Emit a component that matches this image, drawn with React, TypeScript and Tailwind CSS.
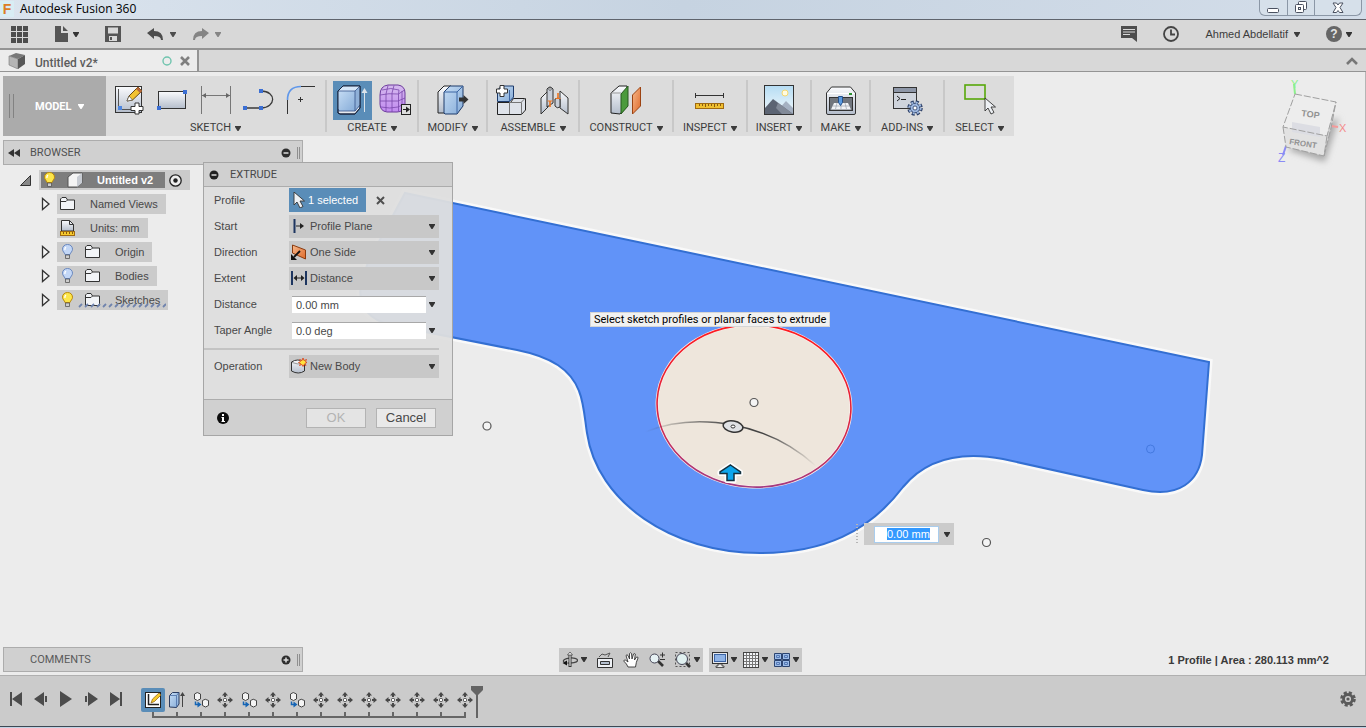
import { FC, ReactElement, ReactNode, useEffect, useRef, useState } from 'react'
import cn from 'clsx'

interface IconProps {
	w?: number
	h?: number
	className?: string
	children: ReactNode
}

const Icon = ({ w = 16, h = 16, className, children }: IconProps): ReactElement => (
	<svg width={w} height={h} viewBox={`0 0 ${w} ${h}`} fill="none" aria-hidden="true" className={cn('shrink-0', className)}>
		{children}
	</svg>
)

const Caret = ({ className }: { className?: string }): ReactElement => (
	<Icon w={6} h={5} className={className}>
		<path d="M0 0h6v1L3.500 5h-1L0 1z" fill="currentColor" />
	</Icon>
)

const Gradients = (): ReactElement => (
	<svg width="0" height="0" className="absolute" aria-hidden="true">
		<defs>
			<linearGradient id="steel" x1="0" y1="0" x2="0" y2="1">
				<stop offset="0" stopColor="#fafbfd" />
				<stop offset="1" stopColor="#b4bdcb" />
			</linearGradient>
			<linearGradient id="sky" x1="0" y1="0" x2="1" y2="1">
				<stop offset="0" stopColor="#c5dcf4" />
				<stop offset="1" stopColor="#86acd8" />
			</linearGradient>
			<linearGradient id="air" x1="0" y1="0" x2="0" y2="1">
				<stop offset="0" stopColor="#b5dcf3" />
				<stop offset="1" stopColor="#f3f9fc" />
			</linearGradient>
			<linearGradient id="clay" x1="0" y1="0" x2="1" y2="1">
				<stop offset="0" stopColor="#f7b98c" />
				<stop offset="1" stopColor="#df6a2a" />
			</linearGradient>
			<linearGradient id="violet" x1="0" y1="0" x2="0" y2="1">
				<stop offset="0" stopColor="#d5baee" />
				<stop offset="1" stopColor="#c18af0" />
			</linearGradient>
		</defs>
	</svg>
)

// ---- toolbar drawings ----

const SketchIcon = () => (
	<Icon w={32} h={32}>
		<rect x="1.500" y="2.500" width="26" height="26" fill="url(#steel)" stroke="#333" />
		<path d="M4.500 5v17M8 25.500h12" stroke="#555" />
		<rect x="4" y="22" width="4" height="4" fill="#4d86e0" />
		<path d="M13 17l2-5L24 3l4 4-9.500 9z" fill="#f2c230" stroke="#6b4a12" />
		<path d="M24 3l4 4-2 2-4-4z" fill="#b5663a" />
		<path d="M13 17l2-5 3.500 4z" fill="#fff" stroke="#444" strokeWidth=".6" />
		<path d="M21 19h4v3.500h4v4h-4V30h-4v-3.500h-4v-4h4z" fill="#fff" stroke="#333" />
	</Icon>
)

const RectangleIcon = () => (
	<Icon w={32} h={32}>
		<rect x="1.500" y="7.500" width="27" height="17" fill="url(#steel)" stroke="#333" />
		<path d="M26 6h4v4h-4zM0 22h4v4H0z" fill="#3b6fd4" />
	</Icon>
)

const DimensionIcon = () => (
	<Icon w={32} h={32}>
		<path d="M1.500 2v28M30.500 2v28M2 11.500h28" stroke="#777" />
		<path d="M2 11.500l4-2.500v5zM30 11.500L26 9v5z" fill="#666" />
	</Icon>
)

const SplineIcon = () => (
	<Icon w={32} h={32}>
		<path d="M2 24h16c15 0 16-17 0-17" stroke="#3a3a3a" strokeWidth="1.300" />
		<path d="M0 22h4v4H0zM16 22h4v4h-4zM16 5h4v4h-4z" fill="#3b6fd4" />
	</Icon>
)

const FilletIcon = () => (
	<Icon w={32} h={32}>
		<path d="M1.500 30V16M15 2.500h14" stroke="#333" />
		<path d="M1.500 16C1.500 7 6 2.500 15 2.500" stroke="#5f97ea" strokeWidth="1.600" />
		<path d="M14.500 13v5M12 15.500h5" stroke="#333" />
	</Icon>
)

const ExtrudeIcon = () => (
	<Icon w={39} h={39}>
		<path d="M5 32V10l5-5h17v22l-5 6H7z" fill="#e6e9ee" stroke="#1d2a44" />
		<path d="M5 28V10h17v20H6z" fill="url(#sky)" />
		<path d="M5 10l5-5h17l-5 5z" fill="#d7e7f8" />
		<path d="M22 10l5-5v20l-5 5z" fill="#8fb0d8" />
		<path d="M5 28l1 2h16l5-6M5 10h17v20M22 10l5-5" stroke="#35548a" strokeWidth=".8" />
		<path d="M5 32V10l5-5h17v22l-5 6H7z" stroke="#16233d" />
		<path d="M31.500 31V10" stroke="#dbe3ea" />
		<path d="M31.500 7l3 5h-6z" fill="#dbe3ea" />
	</Icon>
)

const FormIcon = () => (
	<Icon w={32} h={32}>
		<path d="M1 11Q1 2 9 1h10q7 1 7 8v11q-1 8-8 8H8q-7-1-7-8z" fill="url(#violet)" stroke="#6c3a9c" />
		<path d="M1 11q9-2 18-1M1 17h18M2 23q9 2 17 0M7 10v17M13 9v19M19.500 10v17M3 6q9-3 17 0l-.500 4 6-4M9 1.500L7 10M15 1.500L13 9M19 17l7-3M19 23l6-3M23 7v17" stroke="#7a48ab" strokeWidth=".8" />
		<rect x="22.500" y="20.500" width="9" height="10" fill="#ddd" stroke="#222" />
		<path d="M24 25h3v-2.500l4 3-4 3V26h-3z" fill="#222" />
	</Icon>
)

const ModifyIcon = () => (
	<Icon w={32} h={32}>
		<path d="M1 29V8l6-6h7v27z" fill="url(#steel)" stroke="#222" />
		<path d="M7 29V8l6-6h13v20l-6 8H8z" fill="url(#sky)" stroke="#1d3a6a" />
		<path d="M7 8h13v21M20 8l6-6" stroke="#3d66a4" />
		<path d="M22 13.500h4.500v-2.500l5 4.500-5 4.500v-2.500H22z" fill="#333" />
	</Icon>
)

const ComponentIcon = () => (
	<Icon w={32} h={32}>
		<path d="M2.500 17.500V6l4-4h12v11l-4 4.500z" fill="url(#sky)" stroke="#1d3a6a" />
		<path d="M14.500 17.500l4-4M14.500 6v11" stroke="#3d66a4" />
		<path d="M2.500 18.500h13l3-4h12V26l-4 4.500h-24z" fill="#dfe3ea" stroke="#222" />
		<path d="M14.500 18v12M14.500 18.500h12v12M26.500 18l4-4" stroke="#777" />
		<path d="M5 1.500h4v3.500h3.500v4H9v3.500H5V9H1.500V5H5z" fill="#fff" stroke="#333" />
	</Icon>
)

const JointIcon = () => (
	<Icon w={32} h={32}>
		<path d="M2 14l7-7v16l-7 7z" fill="url(#steel)" stroke="#333" />
		<path d="M8 5q3-4 6 0v14l-6 4z" fill="#c8ced8" stroke="#333" />
		<circle cx="11" cy="5" r="1.300" fill="#fff" stroke="#333" strokeWidth=".7" />
		<path d="M21 7l8 7v16l-8-6z" fill="url(#steel)" stroke="#333" />
		<path d="M16 15q3-2 5 0v8q-3 2-5-1z" fill="#c8ced8" stroke="#333" />
		<path d="M11 17v6M19 9v6" stroke="#ee7420" strokeWidth="1.600" />
		<path d="M8.500 17h5M16.500 14.500h5" stroke="#ee7420" />
	</Icon>
)

const ConstructIcon = () => (
	<Icon w={32} h={32}>
		<path d="M1 29V9l8-7h8v20l-7 8z" fill="url(#steel)" stroke="#222" />
		<path d="M11 10l7-8v20l-7 8z" fill="#4b9a3c" stroke="#27591e" />
		<path d="M1 9h10" stroke="#999" />
		<path d="M22.500 11l8-8v19l-8 8z" fill="url(#clay)" stroke="#9c4312" />
	</Icon>
)

const InspectIcon = () => (
	<Icon w={32} h={32}>
		<path d="M1.500 9v5M29.500 9v5M2 11.500h27" stroke="#333" />
		<rect x="1.500" y="19.500" width="28" height="5" fill="#f0c030" stroke="#a06a10" />
		<path d="M5.500 20v2M8.500 20v2M11.500 20v3M14.500 20v2M17.500 20v2M20.500 20v3M23.500 20v2M26.500 20v2" stroke="#8a5a10" />
	</Icon>
)

const InsertIcon = () => (
	<Icon w={32} h={32}>
		<rect x="1.500" y="1.500" width="29" height="29" fill="url(#air)" stroke="#333" />
		<circle cx="22" cy="9" r="3" fill="#fffbe0" stroke="#f5d770" />
		<path d="M14 27l9-10 7 7v6H14z" fill="#a5b1c2" />
		<path d="M2 24l8-9 20 15H2z" fill="#5c6473" />
		<path d="M10 15l5 4-2 5 6 6h11z" fill="#828a98" />
	</Icon>
)

const MakeIcon = () => (
	<Icon w={32} h={32}>
		<path d="M1.500 9l5-6h19l5 6v20q0 1.500-1.500 1.500H3Q1.500 30.500 1.500 29z" fill="url(#steel)" stroke="#333" />
		<path d="M2 9.500h28" stroke="#fff" />
		<rect x="24" y="9" width="3" height="2" fill="#2c9030" />
		<rect x="4.500" y="13.500" width="23" height="13" fill="#70757d" stroke="#333" />
		<path d="M9 19h14l3 6.500H6z" fill="#f1f3f6" />
		<path d="M7.500 22h17M12 19l-1.500 6M16 19v6M20 19l1.500 6" stroke="#99a1ad" strokeWidth=".7" />
		<path d="M13.500 12.500h4v6l-2 3-2-3z" fill="#5b9be0" stroke="#24508c" />
	</Icon>
)

const AddInsIcon = () => (
	<Icon w={32} h={32}>
		<rect x="2.500" y="3.500" width="23" height="21" fill="#cfd4dc" stroke="#333" />
		<rect x="3" y="4" width="22" height="4" fill="#8e97a8" />
		<path d="M3 8.500h22" stroke="#333" />
		<path d="M6 12l3 2.500L6 17M10 15.500h5" stroke="#222" />
		<circle cx="24" cy="24" r="5.500" stroke="#2c3f66" strokeWidth="4.500" strokeDasharray="2.600 1.720" />
		<circle cx="24" cy="24" r="4.800" fill="#9db7df" stroke="#2c3f66" />
		<circle cx="24" cy="24" r="5.600" stroke="#9db7df" strokeWidth="2" strokeDasharray="2 2.400" />
		<circle cx="24" cy="24" r="2" fill="#fff" stroke="#2c3f66" strokeWidth=".8" />
	</Icon>
)

const CursorShape = ({ x, y }: { x: number, y: number }) => (
	<path d="M0 0v13l3-3 3 6 3-1.500-3-5.500h4.500z" transform={`translate(${x} ${y})`} fill="#eef1f5" stroke="#333" strokeWidth=".9" />
)

const SelectIcon = () => (
	<Icon w={32} h={32}>
		<rect x="1" y="1" width="20" height="14" stroke="#58a80a" strokeWidth="1.600" />
		<CursorShape x={21} y={14} />
	</Icon>
)

interface ToolGroupProps {
	label: string
	className: string
	iconsClassName?: string
	children: ReactNode
	last?: boolean
}

const ToolGroup = ({ label, className, iconsClassName, children, last }: ToolGroupProps): ReactElement => (
	<div className={cn('shrink-0 flex items-center', className)}>
		<div className="flex-1 pt-1">
			<div className={cn('flex h-10 items-center justify-center', iconsClassName)}>{children}</div>
			<button className="flex h-4 w-full items-center justify-center gap-1 font-['Roboto',sans-serif] text-[11px] text-[#3c3c3c]">
				{label}
				<Caret />
			</button>
		</div>
		{!last && <div className="h-13 w-0.5 bg-[#c8c8c8]" />}
	</div>
)

const Tool = ({ name, active, children }: { name: string, active?: boolean, children: ReactNode }): ReactElement => (
	<button aria-label={name} className={cn(active && 'bg-[#5a8db8]')}>{children}</button>
)

const Ribbon = (): ReactElement => (
	<div className="flex h-[60px] w-max bg-[#dcdcdc]">
		<button className="flex w-[103px] items-center bg-[#ababab] pl-1.5 text-white">
			<span className="mr-[21px] h-6 w-[5px] border-x border-[#828282]" />
			<span className="mr-1.5 pt-0.5 font-['Roboto',sans-serif] text-[11px] font-bold">MODEL</span>
			<Caret />
		</button>
		<ToolGroup label="SKETCH" className="w-[221px]" iconsClassName="gap-[11px]">
			<Tool name="Create sketch"><SketchIcon /></Tool>
			<Tool name="Rectangle"><RectangleIcon /></Tool>
			<Tool name="Sketch dimension"><DimensionIcon /></Tool>
			<Tool name="Spline"><SplineIcon /></Tool>
			<Tool name="Fillet"><FilletIcon /></Tool>
		</ToolGroup>
		<ToolGroup label="CREATE" className="w-[92px]" iconsClassName="gap-[7px]">
			<Tool name="Extrude" active><ExtrudeIcon /></Tool>
			<Tool name="Create form"><FormIcon /></Tool>
		</ToolGroup>
		<ToolGroup label="MODIFY" className="w-[69px]">
			<Tool name="Press pull"><ModifyIcon /></Tool>
		</ToolGroup>
		<ToolGroup label="ASSEMBLE" className="w-[92px]" iconsClassName="gap-3">
			<Tool name="New component"><ComponentIcon /></Tool>
			<Tool name="Joint"><JointIcon /></Tool>
		</ToolGroup>
		<ToolGroup label="CONSTRUCT" className="w-[94px]">
			<Tool name="Offset plane"><ConstructIcon /></Tool>
		</ToolGroup>
		<ToolGroup label="INSPECT" className="w-[74px]">
			<Tool name="Measure"><InspectIcon /></Tool>
		</ToolGroup>
		<ToolGroup label="INSERT" className="w-16">
			<Tool name="Insert image"><InsertIcon /></Tool>
		</ToolGroup>
		<ToolGroup label="MAKE" className="w-[59px]">
			<Tool name="3D print"><MakeIcon /></Tool>
		</ToolGroup>
		<ToolGroup label="ADD-INS" className="w-[74px]">
			<Tool name="Scripts and add-ins"><AddInsIcon /></Tool>
		</ToolGroup>
		<ToolGroup label="SELECT" className="w-[69px]" last>
			<Tool name="Select"><SelectIcon /></Tool>
		</ToolGroup>
	</div>
)

// ---- window chrome ----

const TitleBar = (): ReactElement => (
	<header className="flex h-5 shrink-0 items-start justify-between border-b border-[#5f646d] bg-linear-to-r from-[#dbe4ee] via-[#c6d3e1] to-[#d3dde9]">
		<div className="flex items-center gap-1.5">
			<span className="flex h-4 w-3.5 items-center justify-center bg-[#d8edf4] font-['Liberation_Sans',sans-serif] text-sm font-bold text-[#dd7d26]">F</span>
			<h1 className="font-['Open_Sans',sans-serif] text-xs leading-[17px] text-black">Autodesk Fusion 360</h1>
		</div>
		<div className="mr-1 flex h-4 divide-x divide-[#8b97a6] rounded-b-md border border-t-0 border-[#8b97a6] bg-[#d6e0ea]">
			<button aria-label="Minimize" className="flex w-7 items-center justify-center">
				<Icon w={13} h={12}><rect x=".5" y="6.500" width="11" height="4" rx="1" fill="#fff" stroke="#4a5160" /></Icon>
			</button>
			<button aria-label="Restore" className="flex w-[27px] items-center justify-center">
				<Icon w={13} h={13}>
					<rect x="3.500" y=".5" width="8" height="8" rx="1" fill="#fff" stroke="#4a5160" />
					<rect x=".5" y="3.500" width="8" height="8" rx="1" fill="#fff" stroke="#4a5160" />
					<rect x="3.500" y="6.500" width="2" height="2" stroke="#4a5160" />
				</Icon>
			</button>
			<button aria-label="Close" className="flex w-[46px] items-center justify-center">
				<Icon w={13} h={12}>
					<path d="M1 1h3.500L6 3l1.500-2H11L8 5.500l3 5H7.500L6 8.500l-1.500 2H1l3-5z" fill="#fff" stroke="#4a5160" />
				</Icon>
			</button>
		</div>
	</header>
)

const QuickBar = (): ReactElement => (
	<nav className="flex h-[30px] shrink-0 items-center justify-between border-b-2 border-[#949494] bg-[#d8d8d8] pr-3.5 pl-[11px] text-[#4a4a4a]">
		<div className="flex items-center gap-[26px]">
			<button aria-label="Data panel">
				<Icon w={17} h={17}>
					<path d="M0 0h5v5H0zM6 0h5v5H6zM12 0h5v5h-5zM0 6h5v5H0zM6 6h5v5H6zM12 6h5v5h-5zM0 12h5v5H0zM6 12h5v5H6zM12 12h5v5h-5z" fill="#4d4d4d" />
				</Icon>
			</button>
			<button aria-label="File" className="flex items-center gap-[5px]">
				<Icon w={14}><path d="M1 0h6v7h7v9H1zM9 0l5 5H9z" fill="#555" /></Icon>
				<Caret className="text-[#333]" />
			</button>
			<button aria-label="Save">
				<Icon><path fillRule="evenodd" d="M0 0h16v16H0zM3 1.500v6h10v-6zM4 10v5h8v-5zM5 11h2v3H5z" fill="#555" /></Icon>
			</button>
			<div className="flex items-center gap-4">
				<button aria-label="Undo" className="flex items-center gap-1.5 text-[#4d4d4d]">
					<Icon w={17} h={14}><path d="M0 6l7-5v3q9 0 9 9h-2q0-4-7-4v3z" fill="currentColor" /></Icon>
					<Caret />
				</button>
				<button aria-label="Redo" className="flex items-center gap-1.5 text-[#858585]">
					<Icon w={17} h={14}><path d="M17 6l-7-5v3q-9 0-9 9h2q0-4 7-4v3z" fill="currentColor" /></Icon>
					<Caret />
				</button>
			</div>
		</div>
		<div className="flex items-center gap-[26px]">
			<button aria-label="Comments">
				<Icon><path fillRule="evenodd" d="M0 0h16v16l-5-4H0zM2 3v1h12V3zM2 5.500v1h12v-1zM2 8v1h7V8z" fill="#4d4d4d" /></Icon>
			</button>
			<button aria-label="Job status">
				<Icon><circle cx="8" cy="8" r="7" stroke="#444" strokeWidth="1.800" /><path d="M8 3.500V8.500h4" stroke="#444" strokeWidth="1.800" /></Icon>
			</button>
			<button className="flex items-center gap-1.5 text-[11px] text-[#3c3c3c]">
				Ahmed Abdellatif
				<Caret />
			</button>
			<button aria-label="Help" className="flex items-center gap-1">
				<span className="flex size-4 items-center justify-center rounded-full bg-[#666] text-xs font-bold text-[#e4e4e4]">?</span>
				<Caret className="text-[#333]" />
			</button>
		</div>
	</nav>
)

const TabBar = (): ReactElement => (
	<div className="flex h-[22px] shrink-0 items-stretch justify-between border-b border-[#949494] bg-[#d8d8d8]">
		<div className="flex w-[199px] items-center border-r-2 border-[#949494] bg-[#ececec] pr-[7px] pl-2">
			<Icon w={18} h={16}>
				<path d="M1 3l7-3 9 2-7 4z" fill="#777" />
				<path d="M1 3l9 3v10l-9-4z" fill="#b5b5b5" stroke="#777" strokeWidth=".6" />
				<path d="M10 6l7-4v9l-7 5z" fill="#585858" />
			</Icon>
			<span className="ml-[9px] flex-1 pt-1 font-['Roboto',sans-serif] text-xs font-medium text-[#5c5c5c]">Untitled v2*</span>
			<Icon w={10} h={10} className="mr-2"><circle cx="5" cy="5" r="4" stroke="#6fc4ae" strokeWidth="1.400" /></Icon>
			<button aria-label="Close tab">
				<Icon w={10} h={10}><path d="M1 1l8 8M9 1L1 9" stroke="#808080" strokeWidth="2.600" /></Icon>
			</button>
		</div>
		<button aria-label="Collapse" className="mr-2">
			<Icon w={12} h={10}><path d="M1 8l5-5 5 5" stroke="#777" strokeWidth="2.600" /></Icon>
		</button>
	</div>
)

// ---- canvas ----

const Model = (): ReactElement => {
	const outline = 'M405 193L1209 362L1202 455C1199 481 1179 498 1143 490L1003 459C961 451 927 458 903 487C869 532 823 553 760 553C672 553 597 502 587 433C585 421 584 403 579 391C571 370 552 357 517 350L390 325C365 318 358 303 361 285L368 262Z'

	return (
		<svg className="absolute inset-0 h-full w-full" viewBox="0 72 1365 603" preserveAspectRatio="xMidYMid slice" aria-hidden="true">
			<defs>
				<linearGradient id="rim" x1="0" y1="0" x2="0" y2="1">
					<stop offset="0" stopColor="#ff1a20" />
					<stop offset=".5" stopColor="#e0233c" />
					<stop offset="1" stopColor="#a23a80" />
				</linearGradient>
				<linearGradient id="sweep" gradientUnits="userSpaceOnUse" x1="645" y1="0" x2="816" y2="0">
					<stop offset="0" stopColor="#444" stopOpacity="0" />
					<stop offset=".5" stopColor="#444" />
					<stop offset=".7" stopColor="#444" />
					<stop offset="1" stopColor="#444" stopOpacity="0" />
				</linearGradient>
			</defs>
			<path d={outline} fill="none" stroke="#f9f9f9" strokeWidth="7" />
			<path d={outline} fill="#6193f8" stroke="#336fd2" strokeWidth="2" />
			<ellipse cx="754" cy="406" rx="97" ry="81" transform="rotate(4 754 406)" fill="#eee6dc" stroke="#fbeeea" strokeWidth="3" />
			<ellipse cx="754" cy="406" rx="97" ry="81" transform="rotate(4 754 406)" fill="none" stroke="url(#rim)" strokeWidth="1.600" />
			<path d="M645 432Q685 416 733 425T816 466" fill="none" stroke="url(#sweep)" strokeWidth="1.500" />
			<ellipse cx="733" cy="426.500" rx="10" ry="5.500" transform="rotate(10 733 426.500)" fill="#dfe1e4" stroke="#333" strokeWidth="1.500" />
			<ellipse cx="733" cy="426.500" rx="2" ry="1.500" fill="#fff" stroke="#333" />
			<path d="M730.500 465l10 7v1.500H734v7h-7v-7h-7V472z" fill="none" stroke="#fff" strokeWidth="5" strokeLinejoin="round" />
			<path d="M730.500 465l10 7v1.500H734v7h-7v-7h-7V472z" fill="#0da6ec" stroke="#12303f" strokeWidth="1.500" />
			<g fill="#f4f4f4" stroke="#555" strokeWidth="1.200">
				<circle cx="754" cy="402.500" r="4" />
				<circle cx="487" cy="426" r="4" />
				<circle cx="986.500" cy="542.500" r="4" />
			</g>
			<circle cx="1150.500" cy="449" r="4" fill="none" stroke="#4479e0" />
		</svg>
	)
}

const ViewCube = (): ReactElement => (
	<svg width="80" height="96" viewBox="1272 76 80 96" className="absolute top-1 right-3.5 font-['Liberation_Sans',sans-serif]" role="img" aria-label="View cube">
		<defs>
			<filter id="soft" x="-30%" y="-30%" width="160%" height="160%"><feGaussianBlur stdDeviation="3" /></filter>
		</defs>
		<path d="M1289 150l37 12 14-44-26 10z" fill="#aaa" filter="url(#soft)" />
		<path d="M1296 94l-1-10" stroke="#8df08d" strokeWidth="2" />
		<path d="M1332 126l7 1" stroke="#f59a9a" strokeWidth="2" />
		<path d="M1287 146l-3 9" stroke="#8b8bf5" strokeWidth="2" />
		<path d="M1296 94l41 8-9 34-44-9z" fill="#ededed" />
		<path d="M1284 127l44 9-3 20-38-9z" fill="#e2e2e2" />
		<path d="M1328 136l9-34-5 26-7 28z" fill="#d2d2d2" />
		<path d="M1293 122l28 5v10l-28-5z" fill="#dcdde3" />
		<path d="M1296 94l41 8-9 34-44-9zM1284 127l3 20 38 9 3-20M1325 156l7-28 5-26" fill="none" stroke="#a0a0a0" strokeDasharray="7 2" />
		<g fontWeight="bold" fill="#929292">
			<text x="1302" y="116" fontSize="9" transform="rotate(8 1302 116)">TOP</text>
			<text x="1290" y="144" fontSize="8" transform="rotate(9 1290 144)">FRONT</text>
		</g>
		<text x="1292" y="88" fontSize="11" fill="#8df08d">Y</text>
		<text x="1340" y="132" fontSize="11" fill="#f58a8a">X</text>
		<text x="1279" y="162" fontSize="12" fill="#8b8bf5">Z</text>
	</svg>
)

const FloatingValue = (): ReactElement => {
	const input = useRef<HTMLInputElement>(null)

	useEffect(() => {
		input.current?.focus()
		input.current?.select()
	}, [])

	return (
		<div className="absolute top-[451px] left-[855px] flex items-center">
			<Icon w={9} h={22}><path d="M2 1v21" stroke="#b5b5b5" strokeWidth="2" strokeDasharray="1 2" /></Icon>
			<div className="flex h-[22px] items-center bg-[#cbcbcb] pr-1 pl-2.5">
				<input
					ref={input}
					type="text"
					aria-label="Distance value"
					defaultValue="0.00 mm"
					className="h-[17px] w-[65px] border border-[#a9cdee] bg-white pl-3 text-[11px] text-[#333] outline-none selection:bg-[#3399ff] selection:text-white"
				/>
				<button aria-label="Value options" className="ml-[5px]"><Caret className="text-[#333]" /></button>
			</div>
		</div>
	)
}

// ---- browser tree ----

const Bulb = ({ on }: { on?: boolean }): ReactElement => (
	<Icon w={11}>
		<path d="M5.500.500C2.500.500.500 2.500.500 5.200c0 2.300 2 3.300 2.500 5.300h5c.500-2 2.500-3 2.500-5.300C10.500 2.500 8.500.500 5.500.500z" fill={on ? '#fde64a' : '#c3d7f6'} stroke={on ? '#b8860b' : '#6886bd'} />
		<path d="M4 3q-1.500 1-1 3" stroke="#fff" strokeWidth="1.400" />
		<path d="M3.500 11h4v3.500h-4z" fill="#ccc" stroke="#555" strokeWidth=".8" />
	</Icon>
)

const Folder = (): ReactElement => (
	<Icon w={16} h={14}>
		<path d="M.500 12.500V2L2 .500h4L7.500 3h7v9.500z" fill="#f2f4f7" stroke="#333" />
		<path d="M1 4.500h5L7.500 3" stroke="#333" />
	</Icon>
)

const UnitsIcon = (): ReactElement => (
	<Icon w={16}>
		<path d="M1.500 11V.500h8l4 4V11z" fill="url(#steel)" stroke="#333" />
		<path d="M9.500.500v4h4" stroke="#333" />
		<rect x=".5" y="11.500" width="14" height="4" fill="#f5c92c" stroke="#a06a10" />
		<path d="M3.500 12v2M6.500 12v2M9.500 12v2M12.500 12v2" stroke="#8a5a10" />
	</Icon>
)

interface TreeItemProps {
	label: string
	bulb?: 'on' | 'off'
	leaf?: boolean
	hatched?: boolean
}

const TreeItem = ({ label, bulb, leaf, hatched }: TreeItemProps): ReactElement => (
	<li className="flex h-5 items-center">
		<div className="w-[18px]">
			{!leaf && (
				<button aria-label={`Expand ${label}`} className="block">
					<Icon w={11} h={14}><path d="M3.500 1.500v11L10 7z" fill="#f4f4f4" stroke="#333" strokeWidth="1.300" /></Icon>
				</button>
			)}
		</div>
		<div className="relative flex h-5 items-center bg-[#cbcbcb] pr-2 pl-[3px]">
			{bulb && <span className="mr-3 ml-[2px]"><Bulb on={bulb === 'on'} /></span>}
			{leaf ? <UnitsIcon /> : <Folder />}
			<span className="ml-[14px] text-[11px] text-[#484848]">{label}</span>
			{hatched && (
				<svg className="absolute right-0.5 bottom-0.5 h-[5px] w-[88px]" aria-hidden="true">
					<defs>
						<pattern id="hatch" width="6" height="5" patternUnits="userSpaceOnUse">
							<path d="M1 4l3-3" stroke="#6f83ad" strokeWidth="1.800" />
						</pattern>
					</defs>
					<rect width="88" height="5" fill="url(#hatch)" />
				</svg>
			)}
		</div>
	</li>
)

const Browser = (): ReactElement => (
	<section className="mt-1 w-[300px]">
		<div className="flex h-[25px] items-center border border-[#acacac] bg-[#d0d0d0] pr-0.5 pl-1 text-[#505050]">
			<Icon w={12} h={8}><path d="M6 0v8L0 4zM12 0v8L6 4z" fill="#333" /></Icon>
			<h2 className="ml-2.5 flex-1 pt-0.5 font-['Roboto',sans-serif] text-[11px]">BROWSER</h2>
			<button aria-label="Collapse browser">
				<Icon w={10} h={10}><circle cx="5" cy="5" r="4.500" fill="#2e2e2e" /><path d="M2.500 5h5" stroke="#ddd" strokeWidth="1.500" /></Icon>
			</button>
			<span className="ml-1.5 h-3 w-[3px] border-x border-[#8f8f8f]" />
		</div>
		<ul className="mt-[5px] flex flex-col gap-1">
			<li className="flex h-5 items-center pl-4">
				<button aria-label="Collapse Untitled v2" className="w-5">
					<Icon w={14} h={13}><path d="M1.500 11.500h10v-10z" fill="#888" stroke="#333" /></Icon>
				</button>
				<div className="flex h-5 items-center bg-[#cbcbcb] pr-2 pl-0.5">
					<div className="flex h-4 items-center bg-[#7d7d7d] pr-3 pl-[3px]">
						<Bulb on />
						<Icon className="ml-3">
							<path d="M1 5l5-4h9v10l-5 4H1z" fill="#f4f4f4" stroke="#555" />
							<path d="M10 5l5-4v10l-5 4z" fill="#c8ccd3" />
						</Icon>
						<span className="ml-3.5 text-[11px] font-bold text-white">Untitled v2</span>
					</div>
					<Icon w={13} h={13} className="ml-1"><circle cx="6.500" cy="6.500" r="5.700" fill="#eee" stroke="#222" strokeWidth="1.300" /><circle cx="6.500" cy="6.500" r="2.200" fill="#222" /></Icon>
				</div>
			</li>
			<li>
				<ul className="flex flex-col gap-1 pl-9">
					<TreeItem label="Named Views" />
					<TreeItem label="Units: mm" leaf />
					<TreeItem label="Origin" bulb="off" />
					<TreeItem label="Bodies" bulb="off" />
					<TreeItem label="Sketches" bulb="on" hatched />
				</ul>
			</li>
		</ul>
	</section>
)

// ---- extrude dialog ----

const Row = ({ id, label, children }: { id: string, label: string, children: ReactNode }): ReactElement => (
	<div className="flex h-[26px] items-center">
		<label htmlFor={id} className="w-[75px] shrink-0">{label}</label>
		{children}
	</div>
)

const Dropdown = ({ id, value, icon }: { id: string, value: string, icon: ReactNode }): ReactElement => (
	<div className="flex h-[23px] min-w-0 flex-1 items-center bg-[#c8c8c8] pr-1 pl-0.5">
		{icon}
		<select id={id} className="ml-[3px] min-w-0 flex-1 appearance-none bg-transparent outline-none">
			<option>{value}</option>
		</select>
		<Caret className="text-[#333]" />
	</div>
)

const ValueInput = ({ id, initial }: { id: string, initial: string }): ReactElement => {
	const [value, setValue] = useState(initial)

	return (
		<div className="flex min-w-0 flex-1 items-center pr-1 pl-[3px]">
			<input
				id={id}
				type="text"
				value={value}
				onChange={e => setValue(e.target.value)}
				className="h-[17px] min-w-0 flex-1 border-t border-[#a8a8a8] bg-white pl-1 outline-none"
			/>
			<Caret className="ml-[3px] text-[#333]" />
		</div>
	)
}

const ExtrudeDialog = (): ReactElement => (
	<form className="absolute top-[90px] left-[203px] w-[250px] border border-[#a6a6a6] bg-[#dedede]/95 text-[11px] text-[#484848]" onSubmit={e => e.preventDefault()}>
		<div className="flex h-6 items-center gap-[11px] border-b border-[#acacac] bg-[#d0d0d0] pl-[5px]">
			<Icon w={10} h={10}><circle cx="5" cy="5" r="4.500" fill="#222" /><path d="M2.500 5h5" stroke="#ddd" strokeWidth="1.500" /></Icon>
			<h2 className="pt-0.5 font-['Roboto',sans-serif]">EXTRUDE</h2>
		</div>
		<div className="pr-[13px] pb-5 pl-2.5">
			<Row id="profile" label="Profile">
				<button id="profile" type="button" className="flex h-6 items-center bg-[#5a8db8] pr-2 pl-[3px] text-white">
					<Icon><CursorShape x={2} y={0} /></Icon>
					1 selected
				</button>
				<button type="button" aria-label="Clear profile" className="ml-2.5">
					<Icon w={9} h={9}><path d="M1 1l7 7M8 1L1 8" stroke="#505050" strokeWidth="2" /></Icon>
				</button>
			</Row>
			<Row id="start" label="Start">
				<Dropdown id="start" value="Profile Plane" icon={<Icon><path d="M3.500 1v14" stroke="#1d3560" strokeWidth="2" /><path d="M5 8h6" stroke="#222" /><path d="M9 5l4 3-4 3z" fill="#222" /></Icon>} />
			</Row>
			<Row id="direction" label="Direction">
				<Dropdown
					id="direction"
					value="One Side"
					icon={(
						<Icon>
							<path d="M1.500 1l13 5v9l-13-6z" fill="url(#clay)" stroke="#8a3b10" />
							<path d="M9 7L3 13" stroke="#111" strokeWidth="1.800" />
							<path d="M0 16v-6l6 6z" fill="#111" />
						</Icon>
					)}
				/>
			</Row>
			<Row id="extent" label="Extent">
				<Dropdown id="extent" value="Distance" icon={<Icon><path d="M1 1v14M15 1v14" stroke="#1d3560" strokeWidth="2" /><path d="M4 8h8" stroke="#222" /><path d="M6 5L2.500 8 6 11zM10 5l3.500 3-3.500 3z" fill="#222" /></Icon>} />
			</Row>
			<Row id="distance" label="Distance"><ValueInput id="distance" initial="0.00 mm" /></Row>
			<Row id="taper" label="Taper Angle"><ValueInput id="taper" initial="0.0 deg" /></Row>
			<hr className="mt-[5px] mb-[3px] -ml-2.5 border-t-2 border-[#c3c3c3]" />
			<Row id="operation" label="Operation">
				<Dropdown
					id="operation"
					value="New Body"
					icon={(
						<Icon>
							<path d="M.500 4q6-4 13 0v9q-6 4-13 0z" fill="url(#steel)" stroke="#333" />
							<path d="M1 4.500q6 3 12 0" stroke="#999" />
							<path d="M12 0l1 2.500L15.500 1.500 14.500 3.500 16 4.500l-2 .800 1 2.200-2-1L12 8.500l-1-2-2.500 1 1-2L7.500 4.500l2-1-.800-2L11 2.500z" fill="#ffe23d" stroke="#d4381c" strokeWidth=".8" />
						</Icon>
					)}
				/>
			</Row>
		</div>
		<div className="flex h-9 items-center gap-2.5 border-t border-[#acacac] bg-[#d0d0d0] pr-4 pl-[13px]">
			<Icon w={12} h={12} className="mr-auto">
				<circle cx="6" cy="6" r="6" fill="#0c0c0c" />
				<path d="M5 2h2v2H5zM4.500 5H7v4h1v1H4.500V9H5V6h-.500z" fill="#fff" />
			</Icon>
			<button type="submit" disabled className="h-5 w-[60px] border border-[#b3b3b3] bg-[#e4e4e4] text-[13px] leading-4 text-[#b3b3b3]">OK</button>
			<button type="button" className="h-5 w-[60px] border border-[#b3b3b3] bg-[#e9e9e9] text-[13px] leading-4">Cancel</button>
		</div>
	</form>
)

// ---- bottom of the canvas ----

const NavButton = ({ name, menu, children }: { name: string, menu?: boolean, children: ReactNode }): ReactElement => (
	<button aria-label={name} className="flex items-center gap-[3px] text-[#333]">
		<Icon>{children}</Icon>
		{menu && <Caret />}
	</button>
)

const NavBar = (): ReactElement => (
	<div className="flex gap-1.5">
		<div className="flex h-6 items-center gap-2.5 bg-[#c8c8c8] px-[3px]">
			<NavButton name="Orbit" menu>
				<path d="M2 10C-2 6 16 4 15.500 8.500c0 2-6 3-10 2.500" stroke="#444" strokeWidth="1.300" />
				<path d="M8 2v13" stroke="#333" strokeWidth="3" />
				<path d="M8 2v12" stroke="#fff" />
				<path d="M8 0l2.500 3h-5z" fill="#fff" stroke="#333" strokeWidth=".7" />
				<path d="M5 8.500v5L.500 11z" fill="#111" />
			</NavButton>
			<NavButton name="Look at">
				<path d="M.500 6.500h15v9H.500z" fill="#eef1f5" stroke="#333" />
				<path d="M3.500 9.500h9v3h-9z" fill="#b4bfce" stroke="#333" />
				<path d="M2 5l3-3 3 1 5-2-2 4" stroke="#555" />
			</NavButton>
			<NavButton name="Pan">
				<path d="M5 15Q4 12 .700 9q.300-1.500 2-.800L5 10 3 3.500q1-1.500 2 0L6.500 7 6.500 1.500q1-1.500 2 0L9 7l1.500-5q1-1 1.800 0L11.500 8l2-3q1.500-.500 1.500 1-2 4-2.500 9z" fill="#fff" stroke="#333" strokeWidth=".9" />
			</NavButton>
			<NavButton name="Zoom">
				<path d="M9 9l5 5" stroke="#333" strokeWidth="2.600" />
				<circle cx="5.500" cy="6.500" r="4.500" fill="#e6f1f4" stroke="#445" />
				<path d="M11 3h5M13.500.500v5M11 7.500h5" stroke="#333" />
			</NavButton>
			<NavButton name="Fit" menu>
				<rect x=".5" y=".5" width="14" height="14" stroke="#555" strokeDasharray="2 2" />
				<path d="M11 11l4 4" stroke="#333" strokeWidth="2.600" />
				<circle cx="7" cy="7" r="5.500" fill="#e0f0f0" stroke="#445" />
			</NavButton>
		</div>
		<div className="flex h-6 items-center gap-1.5 bg-[#c8c8c8] px-[3px]">
			<NavButton name="Display settings" menu>
				<rect x=".5" y=".5" width="15" height="11" fill="#e4e8ee" stroke="#333" />
				<rect x="2.500" y="2.500" width="11" height="7" fill="#8fb3e6" stroke="#3c64a4" />
				<path d="M6 12h4v2h2v1.500H4V14h2z" fill="#eee" stroke="#333" strokeWidth=".8" />
			</NavButton>
			<NavButton name="Grid and snaps" menu>
				<rect x=".5" y=".5" width="15" height="15" fill="#f2f4f7" stroke="#444" />
				<path d="M3.500 1v14M6.500 1v14M9.500 1v14M12.500 1v14M1 3.500h14M1 6.500h14M1 9.500h14M1 12.500h14" stroke="#777" />
			</NavButton>
			<NavButton name="Viewports" menu>
				<path d="M.500 1.500h7v6h-7zM8.500 1.500h7v6h-7zM.500 8.500h7v6h-7zM8.500 8.500h7v6h-7z" fill="#9dbce8" stroke="#2c4470" />
				<path d="M2.500 3.500h3v2h-3zM10.500 3.500h3v2h-3zM2.500 10.500h3v2h-3zM10.500 10.500h3v2h-3z" stroke="#5579b4" />
			</NavButton>
		</div>
	</div>
)

const BottomRow = (): ReactElement => (
	<div className="mt-auto mb-[3px] grid grid-cols-[1fr_auto_1fr] items-center pr-2">
		<div className="flex h-[25px] w-[300px] items-center border border-[#acacac] bg-[#d0d0d0] pr-0.5 pl-[26px] text-[#5a5a5a]">
			<h2 className="flex-1 pt-0.5 font-['Roboto',sans-serif] text-[11px]">COMMENTS</h2>
			<button aria-label="Expand comments">
				<Icon w={10} h={10}><circle cx="5" cy="5" r="4.500" fill="#2e2e2e" /><path d="M2.500 5h5M5 2.500v5" stroke="#ddd" strokeWidth="1.500" /></Icon>
			</button>
			<span className="ml-1.5 h-3 w-[3px] border-x border-[#8f8f8f]" />
		</div>
		<NavBar />
		<p className="mt-0.5 pr-7 text-right text-[11px] font-bold text-[#3a3a3a]">1 Profile | Area : 280.113 mm^2</p>
	</div>
)

// ---- timeline ----

type Feature = 'sketch' | 'extrude' | 'copy' | 'move'

const features: Feature[] = [
	'sketch', 'extrude', 'copy', 'move', 'copy', 'move', 'copy',
	'move', 'move', 'move', 'move', 'move', 'move', 'move'
]

const FeatureIcon = ({ type }: { type: Feature }): ReactElement => {
	if (type === 'sketch') return (
		<Icon>
			<rect x=".5" y=".5" width="15" height="15" fill="#fff" stroke="#222" />
			<path d="M3.500 2v10.500H14" stroke="#222" strokeWidth="1.500" />
			<path d="M6 11l1.500-4L14 1l2 2-6.500 6.500z" fill="#f5c92c" stroke="#8a5a10" strokeWidth=".7" />
		</Icon>
	)

	if (type === 'extrude') return (
		<Icon>
			<path d="M.500 15V3.500l3-3h6.500V12l-2.500 3.500z" fill="url(#sky)" stroke="#2a3c60" />
			<path d="M7.500 15V3.500l2.500-3M.500 3.500h7" stroke="#4a6ca4" strokeWidth=".8" />
			<path d="M13.500 15V3" stroke="#444" />
			<path d="M13.500 0l2.500 4h-5z" fill="#444" />
		</Icon>
	)

	if (type === 'copy') return (
		<Icon>
			<path d="M1.500 2q2.500-3 6 0v5q-3 3-6 0z" fill="#f4f4f4" stroke="#444" />
			<path d="M9.500 8.500q2.500-2.500 6 0v5q-3 3-6 0z" fill="#f4f4f4" stroke="#444" />
			<path d="M2.500 9.500v3H5" stroke="#1565b5" strokeWidth="1.500" />
			<path d="M4.500 9.500l4 3-4 3z" fill="#1565b5" />
		</Icon>
	)

	return (
		<Icon>
			<path d="M8 0l3 3.500H9V5H7V3.500H5zM8 16l3-3.500H9V11H7v1.500H5zM0 8l3.500-3v2H5v2H3.500v2zM16 8l-3.500-3v2H11v2h1.500v2z" fill="#484848" />
			<rect x="6.500" y="6.500" width="3" height="3" rx="1" fill="#fff" stroke="#444" />
		</Icon>
	)
}

const transport: { name: string, path: string }[] = [
	{ name: 'Go to start', path: 'M2 1h2v14H2zM14 1v14L4 8z' },
	{ name: 'Step back', path: 'M11 1v14L1 8zM12 5h2v6h-2z' },
	{ name: 'Play', path: 'M2 0v16l12-8z' },
	{ name: 'Step forward', path: 'M5 1v14l10-7zM2 5h2v6H2z' },
	{ name: 'Go to end', path: 'M2 1v14l10-7zM12 1h2v14h-2z' }
]

const Timeline = (): ReactElement => (
	<footer className="flex h-[51px] shrink-0 items-start border-t border-[#b0b0b0] bg-[#cbcbcb] pt-2.5 pr-2.5 pl-[3px]">
		<div className="mt-px mr-[13px] flex">
			{transport.map(({ name, path }) => (
				<button key={name} aria-label={name} className="flex h-6 w-[25px] items-center justify-center">
					<Icon><path d={path} fill="#4c4c4c" /></Icon>
				</button>
			))}
		</div>
		<ol className="mt-0.5 flex">
			{features.map((type, i) => (
				<li key={i}>
					<button aria-label={`${type} ${i + 1}`} className={cn('flex size-6 items-center justify-center', i === 0 && 'rounded-xs bg-[#5a8db8]')}>
						<FeatureIcon type={type} />
					</button>
					<Icon w={24} h={6}>
						<path d="M12 0v6" stroke="#666" strokeWidth="2" />
						<path d={i === 0 ? 'M11 5h13' : i === features.length - 1 ? 'M0 5h13' : 'M0 5h24'} stroke="#666" strokeWidth="2" />
					</Icon>
				</li>
			))}
		</ol>
		<Icon w={12} h={32} className="-ml-1.5">
			<path d="M0 0h12v4L7 9v23H5V9L0 4z" fill="#646464" />
		</Icon>
		<button aria-label="Timeline settings" className="mt-[5px] ml-auto">
			<Icon>
				<circle cx="8" cy="8" r="4.500" stroke="#5a5a5a" strokeWidth="2.800" />
				<circle cx="8" cy="8" r="6.500" stroke="#5a5a5a" strokeWidth="2.600" strokeDasharray="3.100 2.005" />
				<circle cx="8" cy="8" r="1.600" fill="#5a5a5a" />
			</Icon>
		</button>
	</footer>
)

const App: FC = () => (
	<div className="flex h-screen flex-col overflow-hidden bg-[#ececec] font-['Liberation_Sans',Arial,sans-serif]">
		<Gradients />
		<TitleBar />
		<QuickBar />
		<TabBar />
		<main className="relative flex min-h-0 flex-1 flex-col border-r border-[#b5b5b5]">
			<Model />
			<ViewCube />
			<div className="relative flex flex-1 flex-col pt-1 pl-[3px]">
				<Ribbon />
				<Browser />
				<BottomRow />
			</div>
			<ExtrudeDialog />
			<div role="tooltip" className="absolute top-[240px] left-[590px] border border-[#d5d5d5] bg-[#f1f1f1] px-[3px] font-['Roboto',sans-serif] text-[11px] leading-[13px] text-black">
				Select sketch profiles or planar faces to extrude
			</div>
			<FloatingValue />
		</main>
		<Timeline />
		<div className="h-0.5 shrink-0 border-t border-[#3d4854] bg-[#c2d3e4]" />
	</div>
)

export default App
